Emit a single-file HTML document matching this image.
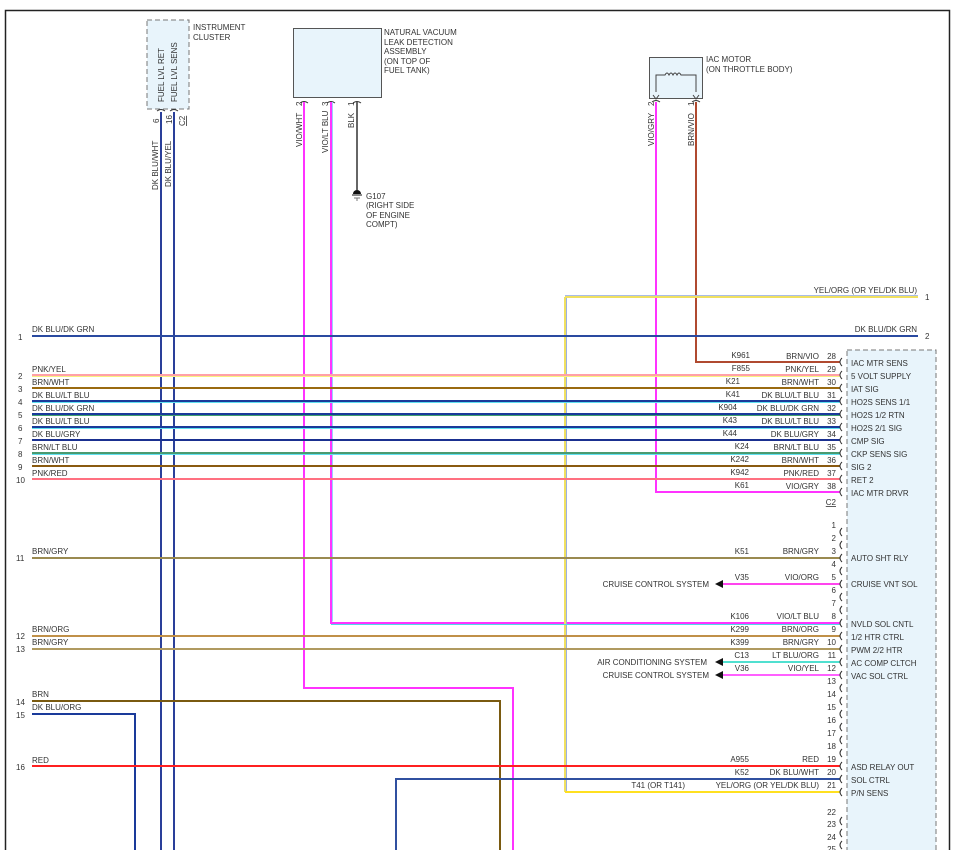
<!DOCTYPE html>
<html><head><meta charset="utf-8"><style>
html,body{margin:0;padding:0;background:#fff;}
svg{display:block;}
text{font-family:"Liberation Sans",sans-serif;font-size:8px;fill:#333;}
.r{text-anchor:end;}
</style></head><body>
<svg width="956" height="850" viewBox="0 0 956 850" xmlns="http://www.w3.org/2000/svg">
<!-- frame -->
<path d="M5.5 850 V10.5 H949.5 V850" fill="none" stroke="#222" stroke-width="1.5"/>

<!-- Instrument cluster -->
<rect x="147" y="20" width="42" height="89" fill="#e8f4fb" stroke="#777" stroke-dasharray="5,3"/>
<text x="193" y="30">INSTRUMENT</text><text x="193" y="40">CLUSTER</text>
<text transform="translate(164,102) rotate(-90)">FUEL LVL RET</text>
<text transform="translate(177,102) rotate(-90)">FUEL LVL SENS</text>
<text transform="translate(159,123) rotate(-90)">6</text>
<text transform="translate(172,124) rotate(-90)">16</text>
<text transform="translate(185,126) rotate(-90)" text-decoration="underline">C2</text>
<path d="M157 111 q4 -3 8 0 M170 111 q4 -3 8 0" fill="none" stroke="#333"/>
<text transform="translate(158,190) rotate(-90)">DK BLU/WHT</text>
<text transform="translate(171,187) rotate(-90)">DK BLU/YEL</text>

<!-- NVLD -->
<rect x="293.5" y="28.5" width="88" height="69" fill="#e8f4fb" stroke="#555"/>
<text x="384" y="35">NATURAL VACUUM</text><text x="384" y="45">LEAK DETECTION</text>
<text x="384" y="54">ASSEMBLY</text><text x="384" y="64">(ON TOP OF</text><text x="384" y="73">FUEL TANK)</text>
<path d="M300 103 q4 -3 8 0 M327 103 q4 -3 8 0 M353 103 q4 -3 8 0" fill="none" stroke="#333"/>
<text transform="translate(302,106) rotate(-90)">2</text>
<text transform="translate(328,106) rotate(-90)">3</text>
<text transform="translate(354,106) rotate(-90)">1</text>
<text transform="translate(302,147) rotate(-90)">VIO/WHT</text>
<text transform="translate(328,153) rotate(-90)">VIO/LT BLU</text>
<text transform="translate(354,128) rotate(-90)">BLK</text>
<line x1="357" y1="102" x2="357" y2="190" stroke="#666" stroke-width="2"/>
<path d="M353 194 a4 4 0 0 1 8 0 z" fill="#111"/><line x1="352" y1="195" x2="362" y2="195" stroke="#111"/><line x1="354" y1="198" x2="360" y2="198" stroke="#777"/><line x1="357" y1="198" x2="357" y2="201" stroke="#777"/>
<text x="366" y="199">G107</text><text x="366" y="208">(RIGHT SIDE</text><text x="366" y="218">OF ENGINE</text><text x="366" y="227">COMPT)</text>

<!-- IAC motor -->
<rect x="649.5" y="57.5" width="53" height="41" fill="#e8f4fb" stroke="#555"/>
<path d="M656 92 V75 H665 q2 -4 4 0 q2 -4 4 0 q2 -4 4 0 q2 -4 4 0 H696 V92" fill="none" stroke="#444"/>
<path d="M653 95 l3 4 l3 -4 M693 95 l3 4 l3 -4" fill="none" stroke="#444"/>
<text x="706" y="62">IAC MOTOR</text><text x="706" y="72">(ON THROTTLE BODY)</text>
<path d="M652 102 q4 -3 8 0 M692 102 q4 -3 8 0" fill="none" stroke="#333"/>
<text transform="translate(654,106) rotate(-90)">2</text>
<text transform="translate(694,106) rotate(-90)">1</text>
<text transform="translate(654,146) rotate(-90)">VIO/GRY</text>
<text transform="translate(694,146) rotate(-90)">BRN/VIO</text>

<!-- PCM connector box -->
<rect x="847" y="350" width="89" height="510" fill="#e8f4fb" stroke="#777" stroke-dasharray="5,3"/>

<!-- vertical wires -->
<g fill="none" stroke-width="2">
<line x1="161" y1="112" x2="161" y2="850" stroke="#2a3f9a"/>
<line x1="174" y1="112" x2="174" y2="850" stroke="#2a3f9a"/>
<path d="M304 102 V688 H513 V850" stroke="#ff33ff"/>
<path d="M331 102 V623 H840" stroke="#ff33ff"/>
<path d="M332.5 102 V621.5" stroke="#9ad0ff" stroke-width="1"/>
<path d="M565 297 V792" stroke="#f0e060"/>
<path d="M566.5 298 V792" stroke="#9ab0e0" stroke-width="1"/>
<path d="M696 102 V362 H840" stroke="#b04a30"/>
<path d="M656 102 V492 H840" stroke="#ff33ff"/>
</g>

<!-- top right wires -->
<g stroke-width="2" fill="none">
<line x1="565" y1="297" x2="918" y2="297" stroke="#f0e060"/>
<line x1="565" y1="295.5" x2="918" y2="295.5" stroke="#a8bce8" stroke-width="1"/>
<line x1="32" y1="336" x2="918" y2="336" stroke="#2a4aa0"/>
<line x1="32" y1="375" x2="840" y2="375" stroke="#ffa0a8"/>
<line x1="32" y1="376.5" x2="840" y2="376.5" stroke="#f8f080" stroke-width="1"/>
<line x1="32" y1="388" x2="840" y2="388" stroke="#9a6a10"/>
<line x1="32" y1="401" x2="840" y2="401" stroke="#1a3a9a"/>
<line x1="32" y1="402.5" x2="840" y2="402.5" stroke="#60e0f0" stroke-width="1"/>
<line x1="32" y1="414" x2="840" y2="414" stroke="#1a3a9a"/>
<line x1="32" y1="415.5" x2="840" y2="415.5" stroke="#40a070" stroke-width="1"/>
<line x1="32" y1="427" x2="840" y2="427" stroke="#1a3a9a"/>
<line x1="32" y1="428.5" x2="840" y2="428.5" stroke="#60e0f0" stroke-width="1"/>
<line x1="32" y1="440" x2="840" y2="440" stroke="#1a3090"/>
<line x1="32" y1="453" x2="840" y2="453" stroke="#4a9a70"/>
<line x1="32" y1="454.5" x2="840" y2="454.5" stroke="#60e0f0" stroke-width="1"/>
<line x1="32" y1="466" x2="840" y2="466" stroke="#8a5a10"/>
<line x1="32" y1="479" x2="840" y2="479" stroke="#ff7080"/>
<!-- lower -->
<line x1="32" y1="558" x2="840" y2="558" stroke="#9a8a50"/>
<line x1="722" y1="584" x2="840" y2="584" stroke="#ff44ee"/>
<line x1="331" y1="624.5" x2="840" y2="624.5" stroke="#50d8e8" stroke-width="1"/>
<line x1="32" y1="636" x2="840" y2="636" stroke="#c09048"/>
<line x1="32" y1="649" x2="840" y2="649" stroke="#b09a60"/>
<line x1="722" y1="662" x2="840" y2="662" stroke="#50e0d0"/>
<line x1="722" y1="675" x2="840" y2="675" stroke="#ff60ff"/>
<path d="M32 701 H500 V850" stroke="#7a5a10"/>
<path d="M32 714 H135 V850" stroke="#1a3a9a"/>
<line x1="32" y1="766" x2="840" y2="766" stroke="#ff2020"/>
<path d="M396 850 V779 H840" stroke="#3050a0"/>
<line x1="565" y1="792" x2="840" y2="792" stroke="#ffe020"/>
</g>
<g fill="#111"><path d="M715 584 l8 -4 v8z"/><path d="M715 662 l8 -4 v8z"/><path d="M715 675 l8 -4 v8z"/></g>

<!-- right top labels -->
<text class="r" x="917" y="293">YEL/ORG (OR YEL/DK BLU)</text><text x="925" y="300">1</text>
<text class="r" x="917" y="332">DK BLU/DK GRN</text><text x="925" y="339">2</text>

<!-- left labels -->
<g>
<text x="32" y="332">DK BLU/DK GRN</text><text x="18" y="340">1</text>
<text x="32" y="372">PNK/YEL</text><text x="18" y="379">2</text>
<text x="32" y="385">BRN/WHT</text><text x="18" y="392">3</text>
<text x="32" y="398">DK BLU/LT BLU</text><text x="18" y="405">4</text>
<text x="32" y="411">DK BLU/DK GRN</text><text x="18" y="418">5</text>
<text x="32" y="424">DK BLU/LT BLU</text><text x="18" y="431">6</text>
<text x="32" y="437">DK BLU/GRY</text><text x="18" y="444">7</text>
<text x="32" y="450">BRN/LT BLU</text><text x="18" y="457">8</text>
<text x="32" y="463">BRN/WHT</text><text x="18" y="470">9</text>
<text x="32" y="476">PNK/RED</text><text x="16" y="483">10</text>
<text x="32" y="554">BRN/GRY</text><text x="16" y="561">11</text>
<text x="32" y="632">BRN/ORG</text><text x="16" y="639">12</text>
<text x="32" y="645">BRN/GRY</text><text x="16" y="652">13</text>
<text x="32" y="697">BRN</text><text x="16" y="705">14</text>
<text x="32" y="710">DK BLU/ORG</text><text x="16" y="718">15</text>
<text x="32" y="763">RED</text><text x="16" y="770">16</text>
</g>

<!-- right wire labels -->
<g>
<text class="r" x="750" y="358">K961</text><text class="r" x="819" y="359">BRN/VIO</text>
<text class="r" x="750" y="371">F855</text><text class="r" x="819" y="372">PNK/YEL</text>
<text class="r" x="740" y="384">K21</text><text class="r" x="819" y="385">BRN/WHT</text>
<text class="r" x="740" y="397">K41</text><text class="r" x="819" y="398">DK BLU/LT BLU</text>
<text class="r" x="737" y="410">K904</text><text class="r" x="819" y="411">DK BLU/DK GRN</text>
<text class="r" x="737" y="423">K43</text><text class="r" x="819" y="424">DK BLU/LT BLU</text>
<text class="r" x="737" y="436">K44</text><text class="r" x="819" y="437">DK BLU/GRY</text>
<text class="r" x="749" y="449">K24</text><text class="r" x="819" y="450">BRN/LT BLU</text>
<text class="r" x="749" y="462">K242</text><text class="r" x="819" y="463">BRN/WHT</text>
<text class="r" x="749" y="475">K942</text><text class="r" x="819" y="476">PNK/RED</text>
<text class="r" x="749" y="488">K61</text><text class="r" x="819" y="489">VIO/GRY</text>
<text class="r" x="749" y="554">K51</text><text class="r" x="819" y="554">BRN/GRY</text>
<text class="r" x="749" y="580">V35</text><text class="r" x="819" y="580">VIO/ORG</text>
<text class="r" x="709" y="587">CRUISE CONTROL SYSTEM</text>
<text class="r" x="749" y="619">K106</text><text class="r" x="819" y="619">VIO/LT BLU</text>
<text class="r" x="749" y="632">K299</text><text class="r" x="819" y="632">BRN/ORG</text>
<text class="r" x="749" y="645">K399</text><text class="r" x="819" y="645">BRN/GRY</text>
<text class="r" x="749" y="658">C13</text><text class="r" x="819" y="658">LT BLU/ORG</text>
<text class="r" x="707" y="665">AIR CONDITIONING SYSTEM</text>
<text class="r" x="749" y="671">V36</text><text class="r" x="819" y="671">VIO/YEL</text>
<text class="r" x="709" y="678">CRUISE CONTROL SYSTEM</text>
<text class="r" x="749" y="762">A955</text><text class="r" x="819" y="762">RED</text>
<text class="r" x="749" y="775">K52</text><text class="r" x="819" y="775">DK BLU/WHT</text>
<text class="r" x="685" y="788">T41 (OR T141)</text><text class="r" x="819" y="788">YEL/ORG (OR YEL/DK BLU)</text>
</g>

<!-- connector pins & labels -->
<g fill="none" stroke="#333">
<path d="M842 358 q-4 4 0 8 M842 371 q-4 4 0 8 M842 384 q-4 4 0 8 M842 397 q-4 4 0 8 M842 410 q-4 4 0 8 M842 423 q-4 4 0 8 M842 436 q-4 4 0 8 M842 449 q-4 4 0 8 M842 462 q-4 4 0 8 M842 475 q-4 4 0 8 M842 488 q-4 4 0 8"/>
<path d="M842 528 q-4 4 0 8 M842 541 q-4 4 0 8 M842 554 q-4 4 0 8 M842 567 q-4 4 0 8 M842 580 q-4 4 0 8 M842 593 q-4 4 0 8 M842 606 q-4 4 0 8 M842 619 q-4 4 0 8 M842 632 q-4 4 0 8 M842 645 q-4 4 0 8 M842 658 q-4 4 0 8 M842 671 q-4 4 0 8 M842 684 q-4 4 0 8 M842 697 q-4 4 0 8 M842 710 q-4 4 0 8 M842 723 q-4 4 0 8 M842 736 q-4 4 0 8 M842 749 q-4 4 0 8 M842 762 q-4 4 0 8 M842 775 q-4 4 0 8 M842 788 q-4 4 0 8 M842 817 q-4 4 0 8 M842 829 q-4 4 0 8 M842 841 q-4 4 0 8"/>
</g>
<g>
<text class="r" x="836" y="359">28</text><text class="r" x="836" y="372">29</text><text class="r" x="836" y="385">30</text><text class="r" x="836" y="398">31</text><text class="r" x="836" y="411">32</text><text class="r" x="836" y="424">33</text><text class="r" x="836" y="437">34</text><text class="r" x="836" y="450">35</text><text class="r" x="836" y="463">36</text><text class="r" x="836" y="476">37</text><text class="r" x="836" y="489">38</text>
<text class="r" x="836" y="505" text-decoration="underline">C2</text>
<text class="r" x="836" y="528">1</text><text class="r" x="836" y="541">2</text><text class="r" x="836" y="554">3</text><text class="r" x="836" y="567">4</text><text class="r" x="836" y="580">5</text><text class="r" x="836" y="593">6</text><text class="r" x="836" y="606">7</text><text class="r" x="836" y="619">8</text><text class="r" x="836" y="632">9</text><text class="r" x="836" y="645">10</text><text class="r" x="836" y="658">11</text><text class="r" x="836" y="671">12</text><text class="r" x="836" y="684">13</text><text class="r" x="836" y="697">14</text><text class="r" x="836" y="710">15</text><text class="r" x="836" y="723">16</text><text class="r" x="836" y="736">17</text><text class="r" x="836" y="749">18</text><text class="r" x="836" y="762">19</text><text class="r" x="836" y="775">20</text><text class="r" x="836" y="788">21</text><text class="r" x="836" y="815">22</text><text class="r" x="836" y="827">23</text><text class="r" x="836" y="840">24</text><text class="r" x="836" y="852">25</text>
</g>
<g>
<text x="851" y="366">IAC MTR SENS</text><text x="851" y="379">5 VOLT SUPPLY</text><text x="851" y="392">IAT SIG</text><text x="851" y="405">HO2S SENS 1/1</text><text x="851" y="418">HO2S 1/2 RTN</text><text x="851" y="431">HO2S 2/1 SIG</text><text x="851" y="444">CMP SIG</text><text x="851" y="457">CKP SENS SIG</text><text x="851" y="470">SIG 2</text><text x="851" y="483">RET 2</text><text x="851" y="496">IAC MTR DRVR</text>
<text x="851" y="561">AUTO SHT RLY</text><text x="851" y="587">CRUISE VNT SOL</text><text x="851" y="627">NVLD SOL CNTL</text><text x="851" y="640">1/2 HTR CTRL</text><text x="851" y="653">PWM 2/2 HTR</text><text x="851" y="666">AC COMP CLTCH</text><text x="851" y="679">VAC SOL CTRL</text><text x="851" y="770">ASD RELAY OUT</text><text x="851" y="783">SOL CTRL</text><text x="851" y="796">P/N SENS</text>
</g>
</svg>
</body></html>
